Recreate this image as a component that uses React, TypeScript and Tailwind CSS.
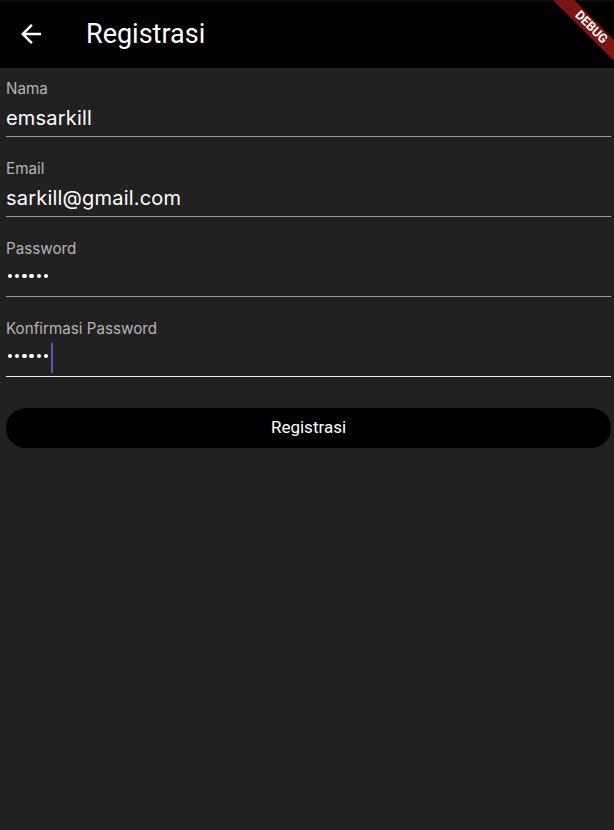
import React from "react";

function Field({ label, value, password, focused, first }: { label: string; value: string; password?: boolean; focused?: boolean; first?: boolean }) {
  return (
    <div className={`${first ? "pt-[12px]" : "pt-[23px]"} flex flex-col border-b ${focused ? "border-[#f0f0f0]" : "border-[#9a9a9a]"}`}>
      <div className="h-[18px] text-[15.2px] leading-[18px] text-[#b4b4b4] font-['Inter',sans-serif]">{label}</div>
      {password ? (
        <div className="h-[38px] flex items-center pb-[2px]">
          <div className="flex items-center gap-[2.8px] pl-[1.5px]">
            {Array.from({ length: 6 }).map((_, i) => (
              <span key={i} className="block w-[4.5px] h-[4.5px] rounded-full bg-white" />
            ))}
            {focused && <span className="block w-[2px] h-[30px] bg-[#6b4fa8] mt-[4px]" />}
          </div>
        </div>
      ) : (
        <div className="h-[38px] flex items-center pt-[2px]">
          <span className="text-[20px] text-white font-['Inter',sans-serif] tracking-[0.2px]">{value}</span>
        </div>
      )}
    </div>
  );
}

export default function App() {
  return (
    <div className="w-[614px] h-[830px] bg-[#212121] flex flex-col overflow-hidden relative">
      <div className="h-[68px] shrink-0 flex items-center relative bg-gradient-to-b from-[#121212] from-0% to-black to-[8%]">
        <div className="w-[68px] flex items-center justify-center">
          <svg width="30" height="30" viewBox="0 0 24 24" className="ml-[-6px]">
            <path d="M20 11H7.83l5.59-5.59L12 4l-8 8 8 8 1.41-1.41L7.83 13H20v-2z" fill="white" />
          </svg>
        </div>
        <div className="ml-[18px] text-[27px] text-white font-['Roboto',sans-serif]">Registrasi</div>
        <div className="absolute top-0 right-0 w-[100px] h-[100px] overflow-hidden pointer-events-none">
          <div className="absolute w-[140px] h-[15px] bg-[#7a1515] top-[20px] left-[7px] rotate-45 flex items-center justify-center">
            <span className="text-[12.5px] font-bold text-white font-['Roboto',sans-serif] leading-none">DEBUG</span>
          </div>
        </div>
      </div>
      <div className="pl-[6px] pr-[3px] flex flex-col">
        <Field label="Nama" value="emsarkill" first />
        <Field label="Email" value="sarkill@gmail.com" />
        <Field label="Password" value="" password />
        <Field label="Konfirmasi Password" value="" password focused />
        <button className="mt-[31px] h-[40px] rounded-full bg-black text-white text-[17px] font-['Roboto',sans-serif] flex items-center justify-center">
          Registrasi
        </button>
      </div>
    </div>
  );
}
